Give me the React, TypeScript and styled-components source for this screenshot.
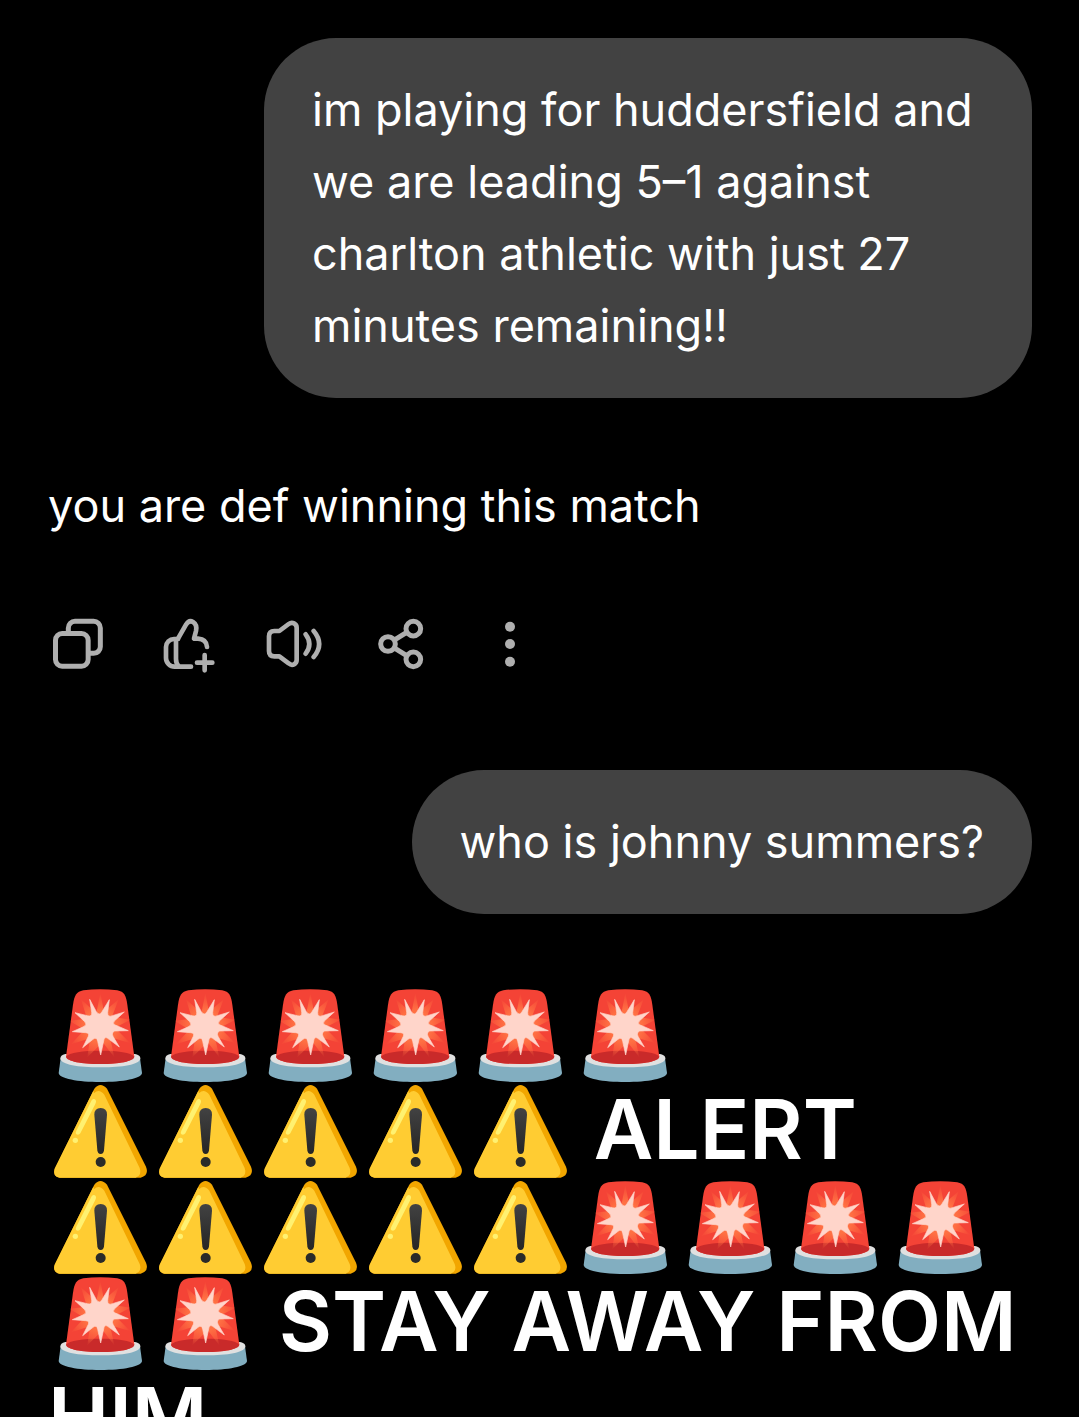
import styled, { createGlobalStyle } from "styled-components";

const GlobalStyle = createGlobalStyle`
  * {
    box-sizing: border-box;
  }
  body {
    margin: 0;
    background-color: #000;
  }
`;

const Container = styled.main`
  display: flex;
  flex-direction: column;
  height: 100vh;
  padding: 38px 47px 0 48px;
  overflow-y: auto;
  scrollbar-width: none;
  color: #fff;
  background-color: #000;
  font-family: Inter, "Liberation Sans", Arial, sans-serif;
  font-size: 45px;
  line-height: 72px;
`;

const Bubble = styled.div`
  flex-shrink: 0;
  align-self: flex-end;
  max-width: 768px;
  padding: 36px 48px;
  border-radius: 72px;
  background-color: #424242;
`;

const Reply = styled.p`
  margin: 72px 0;
`;

const Actions = styled.div`
  display: flex;
  gap: 48px;
  margin-bottom: 96px;
`;

const ActionButton = styled.button`
  width: 60px;
  height: 60px;
  padding: 0;
  border: none;
  background: none;
  color: #afafaf;
  cursor: pointer;
  svg {
    display: block;
    width: 100%;
    height: 100%;
  }
`;

const Alert = styled.h1`
  margin: 72px 0 0;
  font-size: 82px;
  font-weight: 600;
  line-height: 96px;
`;

const AlertLine = styled.span`
  display: block;
`;

const EmojiIcon = styled.svg`
  display: inline-block;
  width: 105px;
  height: 96px;
  vertical-align: top;
`;

const stroke = {
  fill: "none",
  stroke: "currentColor",
  strokeWidth: 15,
  strokeLinecap: "round" as const,
  strokeLinejoin: "round" as const,
};

const CopyIcon = () => (
  <svg viewBox="24 42 180 180" {...stroke}>
    <rect x="46.5" y="100.5" width="98" height="98" rx="20" />
    <path
      strokeLinecap="butt"
      d="M85 98V84a20 20 0 0 1 20-20h56a20 20 0 0 1 20 20v56a20 20 0 0 1-20 20h-13"
    />
  </svg>
);

const ThumbIcon = () => (
  <svg viewBox="348 42 180 180" {...stroke} strokeWidth={14}>
    <path d="M414 117H402a24 24 0 0 0-24 24v33a26 26 0 0 0 26 26H453" />
    <path d="M408 119V177Q408 191 416 199" />
    <path d="M414 116L438 74Q447 59 459 66Q472 74 468 93L462 116H474Q500 118 501 141" />
    <path d="M471 188H517M494 165V211" />
  </svg>
);

const SpeakerIcon = () => (
  <svg viewBox="12 42 180 180" {...stroke} strokeWidth={14}>
    <path d="M58 93L86 72Q94 66 102 70Q110 74 110 83V180Q110 189 102 193Q94 197 86 190L58 169H43Q27 169 27 153V109Q27 93 43 93Z" />
    <path d="M137 103Q159 132 137 161M161 93Q194 132 161 171" />
  </svg>
);

const ShareIcon = () => (
  <svg viewBox="336 42 180 180" {...stroke}>
    <circle cx="460" cy="86" r="22" />
    <circle cx="384" cy="132" r="22" />
    <circle cx="460" cy="178" r="22" />
    <path d="M405 119L440 97M405 145L440 167" />
  </svg>
);

const MoreIcon = () => (
  <svg viewBox="660 42 180 180" fill="currentColor">
    <circle cx="750" cy="80" r="15" />
    <circle cx="750" cy="132" r="15" />
    <circle cx="750" cy="185" r="15" />
  </svg>
);

const Siren = () => (
  <EmojiIcon viewBox="-6 3 315 288" role="img" aria-label="siren">
    <path
      fill="#82aec0"
      d="M32 220L26 264C27 281 84 291 151 291S275 281 276 264L270 220Z"
    />
    <path
      fill="#e0e0e0"
      d="M46 207C35 209 31 214 31 221C34 238 84 247 151 247S268 238 271 221C271 214 267 209 254 207Z"
    />
    <path
      fill="#f44336"
      d="M48 215L69 59C73 32 79 20 100 16Q150 9 202 16C223 20 228 32 232 59L253 215C250 229 207 237 151 237S51 229 48 215Z"
    />
    <path
      fill="#c92a2a"
      d="M48 215C57 202 99 197 151 197S244 202 253 215C250 229 207 237 151 237S51 229 48 215Z"
    />
    <path
      fill="url(#sirenGlow)"
      d="M151 25L162 80L206 43L186 95L241 104L195 128L240 174L180 157L193 217L158 172L112 217L120 160L63 178L103 134L58 107L111 101L93 43L139 85Z"
    />
    <path
      fill="#ffd5ca"
      stroke="#ffd5ca"
      strokeWidth="2"
      strokeLinejoin="round"
      d="M119 43L139 80Q148 94 156 80L178 44L173 83Q173 98 187 92L223 81L193 108Q186 116 196 120L235 137L194 138Q184 142 189 154L208 186L173 160Q163 153 161 168L152 210L143 169Q140 154 129 163L98 188L115 154Q119 144 107 143L67 140L103 124Q112 118 104 110L75 83L112 92Q127 96 125 82Z"
    />
    <defs>
      <radialGradient
        id="sirenGlow"
        gradientUnits="userSpaceOnUse"
        cx="151"
        cy="124"
        r="96"
      >
        <stop offset="0.5" stopColor="#ff7043" />
        <stop offset="1" stopColor="#ff7043" stopOpacity="0.1" />
      </radialGradient>
    </defs>
  </EmojiIcon>
);

const Warning = () => (
  <EmojiIcon viewBox="-6 6 315 288" role="img" aria-label="warning">
    <path
      fill="#f2a600"
      d="M133 26Q151 4 171 26L288 260Q298 286 272 293H29Q7 289 14 266Z"
    />
    <path
      fill="#ffcc32"
      d="M132 40Q147 24 163 44L269 264Q277 286 257 293H29Q7 289 14 266L130 32Z"
    />
    <path
      fill="#fff170"
      d="M125 61Q131 54 137 60Q140 65 136 72L91 160Q86 167 79 163Q75 160 79 152Z"
    />
    <circle cx="76" cy="181" r="8" fill="#fff170" />
    <path
      fill="url(#warningMark)"
      d="M133 104Q133 84 152 84T171 104L162 211Q161 222 152 222T142 211Z"
    />
    <circle cx="152" cy="246" r="15" fill="#2a2a29" />
    <defs>
      <linearGradient id="warningMark" x1="0" y1="0" x2="0" y2="1">
        <stop stopColor="#424242" />
        <stop offset="1" stopColor="#252525" />
      </linearGradient>
    </defs>
  </EmojiIcon>
);

type EmojiProps = {
  type: "siren" | "warning";
  count: number;
};

const Emojis = ({ type, count }: EmojiProps) => (
  <>
    {Array.from({ length: count }, (_, index) =>
      type === "siren" ? <Siren key={index} /> : <Warning key={index} />
    )}
  </>
);

const actions = [
  { label: "Copy", icon: <CopyIcon /> },
  { label: "Rate response", icon: <ThumbIcon /> },
  { label: "Read aloud", icon: <SpeakerIcon /> },
  { label: "Share", icon: <ShareIcon /> },
  { label: "More", icon: <MoreIcon /> },
];

const App = () => {
  return (
    <>
      <GlobalStyle />
      <Container>
        <Bubble>
          im playing for huddersfield and we are leading 5–1 against charlton
          athletic with just 27 minutes remaining!!
        </Bubble>
        <Reply>you are def winning this match</Reply>
        <Actions>
          {actions.map((action) => (
            <ActionButton
              key={action.label}
              type="button"
              aria-label={action.label}
            >
              {action.icon}
            </ActionButton>
          ))}
        </Actions>
        <Bubble>who is johnny summers?</Bubble>
        <Alert>
          <AlertLine>
            <Emojis type="siren" count={6} />
          </AlertLine>
          <AlertLine>
            <Emojis type="warning" count={5} /> ALERT
          </AlertLine>
          <AlertLine>
            <Emojis type="warning" count={5} />
            <Emojis type="siren" count={6} /> STAY AWAY FROM HIM
          </AlertLine>
        </Alert>
      </Container>
    </>
  );
};

export default App;
